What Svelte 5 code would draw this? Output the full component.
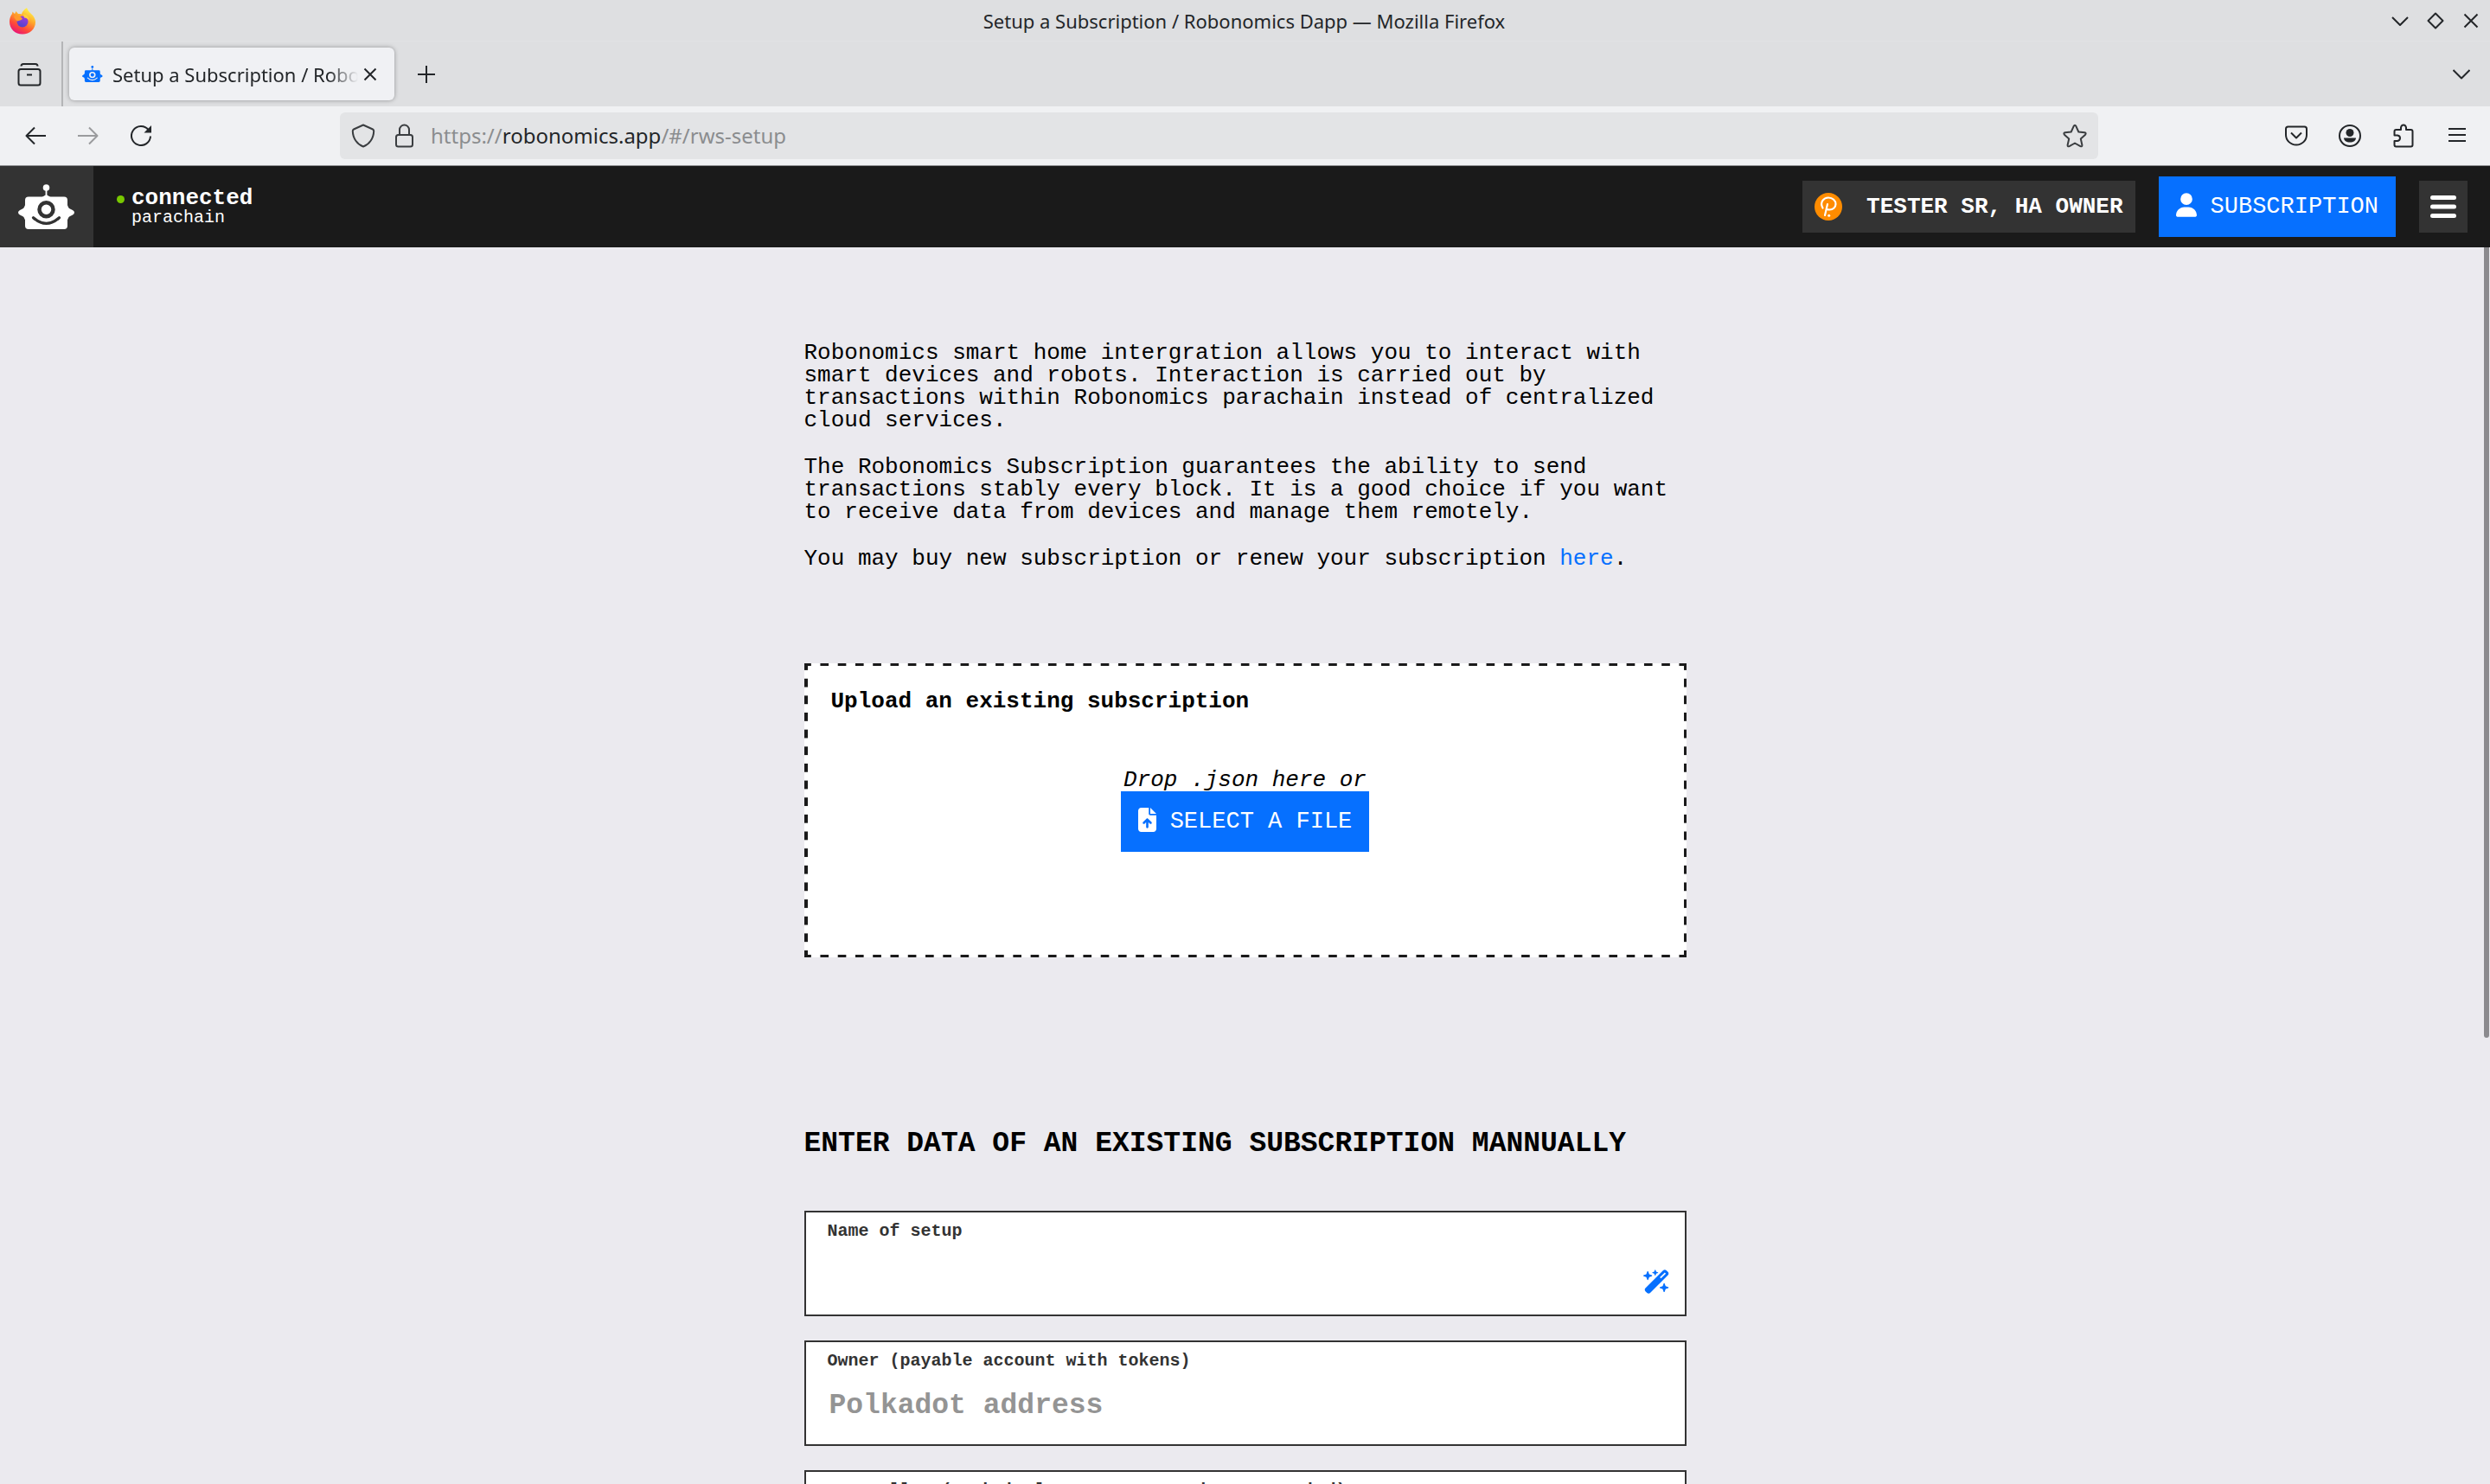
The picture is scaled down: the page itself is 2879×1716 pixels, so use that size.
<script>
  const pageTitle = 'Setup a Subscription / Robonomics Dapp';

  let fields = $state([
    { id: 'setup-name', label: 'Name of setup', placeholder: '', value: '', wand: true },
    { id: 'owner', label: 'Owner (payable account with tokens)', placeholder: 'Polkadot address', value: '', wand: false },
    { id: 'controller', label: 'Controller (technical account, must be unoccupied)', placeholder: 'Polkadot address', value: '', wand: false }
  ]);

  let fileInput;
</script>

{#snippet robot(eye)}
  <svg viewBox="0 0 66 52" aria-hidden="true">
    <circle cx="32.5" cy="4" r="3.8" fill="currentColor" />
    <path d="M31.6 6h1.8v6.5l4 2.5h-9.8l4-2.5z" fill="currentColor" />
    <rect x="8" y="14.5" width="49" height="37.5" rx="4" fill="currentColor" />
    <path d="M9 23c-2 2-1.500 4.500-4 5.500l-3 1.500q-2 1.200-2 2.800t2 2.800l3 1.500c2.500 1 2 3.500 4 5.500zM56 23c2 2 1.500 4.500 4 5.500l3 1.500q2 1.200 2 2.800t-2 2.800l-3 1.500c-2.500 1-2 3.500-4 5.500z" fill="currentColor" />
    <circle cx="32.5" cy="29.200" r="8" fill="none" stroke={eye} stroke-width="4.500" />
    <path d="M17.500 38.700q15 13.500 30 0" fill="none" stroke={eye} stroke-width="3.200" stroke-linecap="round" />
  </svg>
{/snippet}

<div class="window">
  <div class="titlebar">
    <svg class="firefox" viewBox="0 0 32 32" aria-hidden="true">
      <defs>
        <linearGradient id="ff-body" x1="0.8" y1="0.1" x2="0.3" y2="1">
          <stop offset="0" stop-color="#fff04a" />
          <stop offset="0.35" stop-color="#ffa82a" />
          <stop offset="0.7" stop-color="#ff4b37" />
          <stop offset="1" stop-color="#e8127a" />
        </linearGradient>
        <linearGradient id="ff-core" x1="0.7" y1="0" x2="0.3" y2="1">
          <stop offset="0" stop-color="#a23be0" />
          <stop offset="1" stop-color="#4a45c8" />
        </linearGradient>
      </defs>
      <path d="M21 1c1 3 3 5 5 7 3 2.500 5 6 5 9.500C31 25.500 24.500 31.500 16 31.500S1 25.500 1 17c0-3.500 1-6.500 3-9l.5-2.500L7 8l1.500-3 2.500 3c2 0 3 0 4 .5C15.500 5.500 18 3 21 1z" fill="url(#ff-body)" />
      <circle cx="16" cy="17" r="6.500" fill="url(#ff-core)" />
      <path d="M6 11c2-1.500 5-1.500 8 .5l2 2.200c-1 1.800-4 1.800-6 2.800-1.500-1-3-3-4-5.500z" fill="#ff9a2c" />
      <path d="M17 8.500c4 0 6.500 3.500 7 8-1.500-3-3.500-4-6-4z" fill="#ffd23e" />
    </svg>
    <span class="window-title">{pageTitle} — Mozilla Firefox</span>
    <div class="window-buttons">
      <button aria-label="Minimize"><svg viewBox="0 0 20 20"><path d="M1 6l9 9 9-9" /></svg></button>
      <button aria-label="Maximize"><svg viewBox="0 0 20 20"><path d="M10 1.500l8.500 8.500-8.500 8.500L1.500 10z" /></svg></button>
      <button aria-label="Close"><svg viewBox="0 0 20 20"><path d="M2.500 2.500l15 15m0-15l-15 15" /></svg></button>
    </div>
  </div>

  <div class="tabstrip">
    <button class="recent" aria-label="Recent browsing">
      <svg class="s28" viewBox="0 0 28 28"><rect x="1.500" y="8" width="25" height="18.500" rx="2.500" /><path d="M4.500 4.500q0-2.500 2.500-2.500h14q2.500 0 2.500 2.500M11 14.500h6" /></svg>
    </button>
    <div class="tab">
      <span class="favicon">{@render robot('#f0f1f4')}</span>
      <span class="tab-title">{pageTitle}</span>
      <button class="tab-close" aria-label="Close tab"><svg viewBox="0 0 16 16"><path d="M1.500 1.500l13 13m0-13l-13 13" /></svg></button>
    </div>
    <button class="new-tab" aria-label="New tab"><svg viewBox="0 0 20 20"><path d="M10 0v20M0 10h20" /></svg></button>
    <button class="all-tabs" aria-label="List all tabs"><svg viewBox="0 0 20 20"><path d="M.5 5l9.500 9.500L19.500 5" /></svg></button>
  </div>

  <div class="toolbar">
    <div class="nav">
      <button aria-label="Back"><svg viewBox="0 0 24 24"><path d="M24 12H1.500M11 2.500L1.500 12l9.500 9.500" /></svg></button>
      <button aria-label="Forward" disabled><svg viewBox="0 0 24 24"><path d="M0 12h22.500M13 2.500l9.500 9.500-9.500 9.500" /></svg></button>
      <button aria-label="Reload"><svg viewBox="0 0 24 24"><path d="M20.500 5a11 11 0 1 0 2.500 7.500" /><path class="solid" d="M24 0v8.500h-8.500z" /></svg></button>
    </div>
    <div class="urlbar">
      <svg class="s28" viewBox="0 0 28 28" aria-hidden="true"><path d="M14 1.500l11 5c1 .5 1.200 1 1.200 2C26 17 21 24 14 26.500 7 24 2 17 1.800 8.500c0-1 .2-1.500 1.200-2z" /></svg>
      <svg class="s28" viewBox="0 0 28 28" aria-hidden="true"><rect x="4" y="13" width="19" height="13.500" rx="2.500" /><path d="M8 13V7a5.500 5.500 0 0 1 11 0v6" /></svg>
      <span class="url">https://<b>robonomics.app</b>/#/rws-setup</span>
      <button aria-label="Bookmark this page"><svg class="s28" viewBox="0 0 28 28"><path d="M12.700 2.800q1.300-2.200 2.600 0l3 6.700 7 .8q2.200.5.800 2.400l-5.300 4.800 1.600 7.300q.1 2.200-2 1.300L14 22.500l-6.400 3.600q-2.100.9-2-1.300l1.600-7.300-5.300-4.800q-1.400-1.900.8-2.400l7-.8z" /></svg></button>
    </div>
    <div class="extras">
      <button aria-label="Save to Pocket"><svg class="s28" viewBox="0 0 28 28"><path d="M4.500 3.500h19q2.500 0 2.500 2.500v7a12 11.500 0 0 1-24 0V6q0-2.500 2.500-2.500zM8 10.500l6 6 6-6" /></svg></button>
      <button aria-label="Account"><svg class="s28" viewBox="0 0 28 28"><circle cx="14" cy="14" r="12" /><circle class="solid" cx="14" cy="10.500" r="4.500" /><path class="solid" d="M7 16.500h14c0 3-3 5-7 5s-7-2-7-5z" /></svg></button>
      <button aria-label="Extensions"><svg class="s28" viewBox="0 0 28 28"><path d="M5.500 26.500h17q2 0 2-2V9q0-2-2-2H17V4.500q-.5-3-3-3t-3 3V7H5.500q-2 0-2 2v4.500H7q3 .5 3 3.200t-3 3.300H3.500v4.500q0 2 2 2z" /></svg></button>
      <button aria-label="Open application menu"><svg class="s28" viewBox="0 0 28 28"><path d="M4 6h20M4 13h20M4 20h20" /></svg></button>
    </div>
  </div>

  <div class="viewport">
    <header>
      <a class="logo" href="#/" aria-label="Robonomics">{@render robot('#333333')}</a>
      <div class="status">
        <span class="dot"></span>
        <div><strong>connected</strong><small>parachain</small></div>
      </div>
      <div class="actions">
        <button class="account">
          <svg viewBox="0 0 32 32" aria-hidden="true"><circle cx="16" cy="16" r="16" fill="#ff8c00" /><path d="M9.500 17.500C5.500 10.500 11 5.500 16 5.500c5 0 8.500 3.500 8.500 7.500s-3.500 6.500-7 6.500c-1.500 0-2.500-.3-3-.5M15 13l-3 13" fill="none" stroke="#fff" stroke-width="2.200" stroke-linecap="round" /><circle cx="16.700" cy="26.200" r="1.500" fill="#fff" /></svg>
          TESTER SR, HA OWNER
        </button>
        <button class="primary">
          <svg class="user" viewBox="0 0 448 512" aria-hidden="true"><path d="M224 256A128 128 0 1 0 224 0a128 128 0 1 0 0 256zm-45.700 48C79.800 304 0 383.800 0 482.300C0 498.700 13.300 512 29.700 512H418.300c16.400 0 29.700-13.300 29.700-29.700C448 383.800 368.200 304 269.700 304H178.300z" fill="currentColor" /></svg>
          SUBSCRIPTION
        </button>
        <button class="menu" aria-label="Menu"><svg viewBox="0 0 30 28"><path d="M2.500 3.500h25M2.500 14h25M2.500 24.500h25" stroke="#fff" stroke-width="5" stroke-linecap="round" /></svg></button>
      </div>
    </header>

    <main>
      <section class="intro">
        <p>Robonomics smart home intergration allows you to interact with smart devices and robots. Interaction is carried out by transactions within Robonomics parachain instead of centralized cloud services.</p>
        <p>The Robonomics Subscription guarantees the ability to send transactions stably every block. It is a good choice if you want to receive data from devices and manage them remotely.</p>
        <p>You may buy new subscription or renew your subscription <a href="#/rws-buy">here</a>.</p>
      </section>

      <section class="dropzone">
        <h3>Upload an existing subscription</h3>
        <div class="drop">
          <em>Drop .json here or</em>
          <button class="primary" onclick={() => fileInput.click()}>
            <svg class="file" viewBox="0 0 384 512" aria-hidden="true"><path d="M64 0C28.700 0 0 28.700 0 64V448c0 35.300 28.700 64 64 64H320c35.300 0 64-28.700 64-64V160H256c-17.700 0-32-14.300-32-32V0H64zM256 0V128H384L256 0zM216 408c0 13.300-10.700 24-24 24s-24-10.700-24-24V305.900l-31 31c-9.400 9.400-24.600 9.400-33.900 0s-9.400-24.600 0-33.900l72-72c9.400-9.400 24.600-9.400 33.900 0l72 72c9.400 9.400 9.400 24.600 0 33.900s-24.600 9.400-33.900 0l-31-31V408z" fill="currentColor" /></svg>
            SELECT A FILE
          </button>
          <input type="file" accept=".json" hidden bind:this={fileInput} aria-label="Subscription file" />
        </div>
      </section>

      <h2>ENTER DATA OF AN EXISTING SUBSCRIPTION MANNUALLY</h2>

      <form>
        {#each fields as field (field.id)}
          <div class="field">
            <label for={field.id}>{field.label}</label>
            <div class="entry">
              <input id={field.id} type="text" placeholder={field.placeholder} bind:value={field.value} />
              {#if field.wand}
                <button type="button" class="wand" aria-label="Generate a name">
                  <svg viewBox="0 0 576 512"><path d="M234.700 42.700L197 56.800c-3 1.100-5 4-5 7.200s2 6.100 5 7.200l37.700 14.100L248.800 123c1.100 3 4 5 7.200 5s6.100-2 7.200-5l14.100-37.700L315 71.200c3-1.100 5-4 5-7.200s-2-6.100-5-7.200L277.300 42.700 263.200 5c-1.100-3-4-5-7.200-5s-6.100 2-7.200 5L234.700 42.700zM46.100 395.400c-18.700 18.700-18.700 49.100 0 67.900l34.600 34.600c18.700 18.700 49.100 18.700 67.900 0L529.900 116.500c18.700-18.700 18.700-49.100 0-67.900L495.300 14.100c-18.700-18.700-49.100-18.700-67.900 0L46.100 395.400zM484.600 82.600l-105 105-23.300-23.300 105-105 23.300 23.300zM7.500 117.200C3 118.900 0 123.200 0 128s3 9.100 7.500 10.800L64 160l21.200 56.500c1.700 4.500 6 7.500 10.800 7.500s9.100-3 10.800-7.500L128 160l56.500-21.200c4.500-1.700 7.500-6 7.500-10.800s-3-9.100-7.500-10.800L128 96 106.800 39.500C105.100 35 100.800 32 96 32s-9.100 3-10.800 7.500L64 96 7.500 117.200zm352 256c-4.500 1.700-7.500 6-7.500 10.800s3 9.100 7.500 10.800L416 416l21.200 56.500c1.700 4.500 6 7.500 10.800 7.500s9.100-3 10.800-7.500L480 416l56.500-21.200c4.500-1.700 7.500-6 7.500-10.800s-3-9.100-7.500-10.800L480 352l-21.200-56.500c-1.700-4.500-6-7.500-10.800-7.500s-9.100 3-10.800 7.500L416 352l-56.500 21.200z" fill="currentColor" /></svg>
                </button>
              {/if}
            </div>
          </div>
        {/each}
      </form>
    </main>
    <div class="scrollbar"></div>
  </div>
</div>

<style>
  :global(body) {
    margin: 0;
  }
  .window {
    display: flex;
    flex-direction: column;
    height: 100vh;
    overflow: hidden;
    background: #dedfe1;
    color: #232629;
    font-family: 'Noto Sans', sans-serif;
    font-size: 22px;
  }
  .window *,
  .window *::before {
    box-sizing: border-box;
  }
  svg {
    display: block;
    flex: none;
  }
  button {
    display: flex;
    align-items: center;
    justify-content: center;
    padding: 0;
    border: 0;
    background: none;
    color: inherit;
    font: inherit;
    cursor: pointer;
  }

  /* browser chrome */
  .titlebar svg,
  .tabstrip button svg,
  .toolbar svg {
    fill: none;
    stroke: currentColor;
    stroke-width: 2;
    stroke-linejoin: round;
  }
  .titlebar .firefox {
    stroke: none;
    width: 32px;
    height: 32px;
  }
  .toolbar .solid {
    fill: currentColor;
    stroke: none;
  }
  svg.s28 {
    width: 28px;
    height: 28px;
  }
  .titlebar {
    display: grid;
    grid-template-columns: 1fr auto 1fr;
    align-items: center;
    height: 48px;
    flex: none;
    padding: 0 12px 0 10px;
    border-bottom: 1px solid #e1e2e4;
  }
  .window-title {
    line-height: 24px;
  }
  .window-buttons {
    display: flex;
    justify-content: flex-end;
    gap: 21px;
  }
  .window-buttons svg,
  .new-tab svg,
  .all-tabs svg {
    width: 20px;
    height: 20px;
  }
  .tabstrip {
    display: flex;
    align-items: center;
    height: 75px;
    flex: none;
  }
  .recent {
    width: 73px;
    height: 75px;
    padding-right: 3px;
    border-right: 2px solid #b4b5b7;
  }
  .tab {
    display: flex;
    align-items: center;
    width: 376px;
    height: 61px;
    margin-left: 7px;
    padding: 0 20px 0 15px;
    border-radius: 6px;
    background: #f0f1f4;
    box-shadow: 0 0 5px rgba(0, 0, 0, 0.35);
  }
  .favicon {
    width: 24px;
    color: #0670ff;
  }
  .tab-title {
    flex: 1;
    min-width: 0;
    margin-left: 11px;
    overflow: hidden;
    white-space: nowrap;
    mask-image: linear-gradient(90deg, #000 calc(100% - 40px), transparent calc(100% - 6px));
  }
  .tab-close svg {
    width: 16px;
    height: 16px;
  }
  .new-tab {
    margin-left: 27px;
  }
  .all-tabs {
    margin-left: auto;
    margin-right: 23px;
  }
  .toolbar {
    display: flex;
    align-items: center;
    height: 69px;
    flex: none;
    background: #f0f1f3;
    border-bottom: 1px solid #8f9092;
  }
  .nav {
    display: flex;
    gap: 37px;
    width: 393px;
    flex: none;
    padding-left: 29px;
  }
  .nav svg {
    width: 24px;
    height: 24px;
  }
  .nav button:disabled {
    color: #9a9b9d;
  }
  .urlbar {
    display: flex;
    align-items: center;
    gap: 20px;
    flex: 1;
    height: 54px;
    padding: 0 13px;
    border-radius: 6px;
    background: #e3e4e6;
    color: #3a3d40;
  }
  .url {
    flex: 1;
    margin-left: -4px;
    color: #8b8d8f;
    font-size: 24px;
    line-height: 32px;
  }
  .url b {
    color: #232629;
    font-weight: 400;
  }
  .extras {
    display: flex;
    justify-content: flex-end;
    gap: 34px;
    width: 453px;
    flex: none;
    padding-right: 24px;
  }

  /* application */
  .viewport {
    position: relative;
    flex: 1;
    min-height: 0;
    overflow: hidden;
    background: #ebeaef;
    color: #000;
    font-family: 'Liberation Mono', monospace;
    font-size: 26px;
    line-height: 26px;
  }
  header {
    display: flex;
    align-items: center;
    height: 94px;
    padding-right: 26px;
    background: #1a1a1a;
    color: #fff;
  }
  .logo {
    display: flex;
    align-items: center;
    justify-content: center;
    width: 108px;
    height: 94px;
    background: #333;
    color: #fff;
  }
  .logo :global(svg) {
    width: 66px;
    height: 52px;
  }
  .status {
    display: flex;
    align-items: flex-start;
    gap: 8px;
    margin-left: 27px;
  }
  .dot {
    width: 9px;
    height: 9px;
    margin-top: 10px;
    border-radius: 50%;
    background: #78c800;
  }
  .status strong,
  .status small {
    display: block;
  }
  .status small {
    font-size: 20px;
    line-height: 20px;
  }
  .actions {
    display: flex;
    align-items: center;
    gap: 27px;
    margin-left: auto;
  }
  .account {
    gap: 28px;
    height: 60px;
    padding: 0 14px;
    background: #333;
    font-weight: 700;
  }
  .account svg {
    width: 32px;
    height: 32px;
  }
  .primary {
    gap: 16px;
    height: 70px;
    padding: 0 20px;
    background: #0670ff;
    color: #fff;
    font-size: 27px;
  }
  .primary svg {
    height: 28px;
    margin-bottom: 4px;
  }
  .user {
    width: 24px;
  }
  .file {
    width: 21px;
  }
  .menu {
    width: 56px;
    height: 60px;
    background: #333;
  }
  .menu svg {
    width: 30px;
    height: 28px;
  }
  main {
    width: 1020px;
    max-width: 100%;
    margin: 0 auto;
    padding-top: 109px;
  }
  p {
    margin: 0 0 28px;
  }
  p:last-child {
    margin: 0;
  }
  a {
    color: #0670ff;
    text-decoration: none;
  }
  .dropzone {
    min-height: 340px;
    margin-top: 108px;
    padding: 28px;
    border: 3px solid transparent;
    background:
      linear-gradient(90deg, #1a1a1a 25%, transparent 25% 75%, #1a1a1a 75%) 0 -3px / 2% 3px round no-repeat,
      linear-gradient(90deg, #1a1a1a 25%, transparent 25% 75%, #1a1a1a 75%) 0 calc(100% + 3px) / 2% 3px round no-repeat,
      linear-gradient(#1a1a1a 25%, transparent 25% 75%, #1a1a1a 75%) -3px 0 / 3px 20px no-repeat round,
      linear-gradient(#1a1a1a 25%, transparent 25% 75%, #1a1a1a 75%) calc(100% + 3px) 0 / 3px 20px no-repeat round,
      #fff;
    background-clip: border-box;
  }
  h3 {
    margin: 0;
    font-size: 26px;
  }
  .drop {
    display: flex;
    flex-direction: column;
    align-items: center;
    margin-top: 65px;
  }
  h2 {
    margin: 199px 0 61px;
    font-size: 33px;
    line-height: 33px;
    white-space: nowrap;
  }
  form {
    display: grid;
    gap: 28px;
  }
  .field {
    min-height: 122px;
    padding: 12px 17px 0 25px;
    border: 2px solid #333;
    background: #fff;
  }
  label {
    display: block;
    color: #333;
    font-size: 20px;
    font-weight: 700;
    line-height: 20px;
  }
  .entry {
    display: flex;
    align-items: flex-start;
    margin-top: 25px;
  }
  .entry input {
    flex: 1;
    min-width: 0;
    height: 33px;
    padding: 0 2px;
    border: 0;
    outline: 0;
    background: none;
    color: #000;
    font: 700 33px/33px 'Liberation Mono', monospace;
  }
  .entry input::placeholder {
    color: #949494;
    opacity: 1;
  }
  .wand {
    padding-top: 9px;
    color: #0670ff;
  }
  .wand svg {
    width: 31px;
    height: 28px;
  }
  .scrollbar {
    position: absolute;
    top: 94px;
    right: 1px;
    width: 6px;
    height: 60%;
    border-radius: 0 0 3px 3px;
    background: #8b8a8e;
  }
</style>
